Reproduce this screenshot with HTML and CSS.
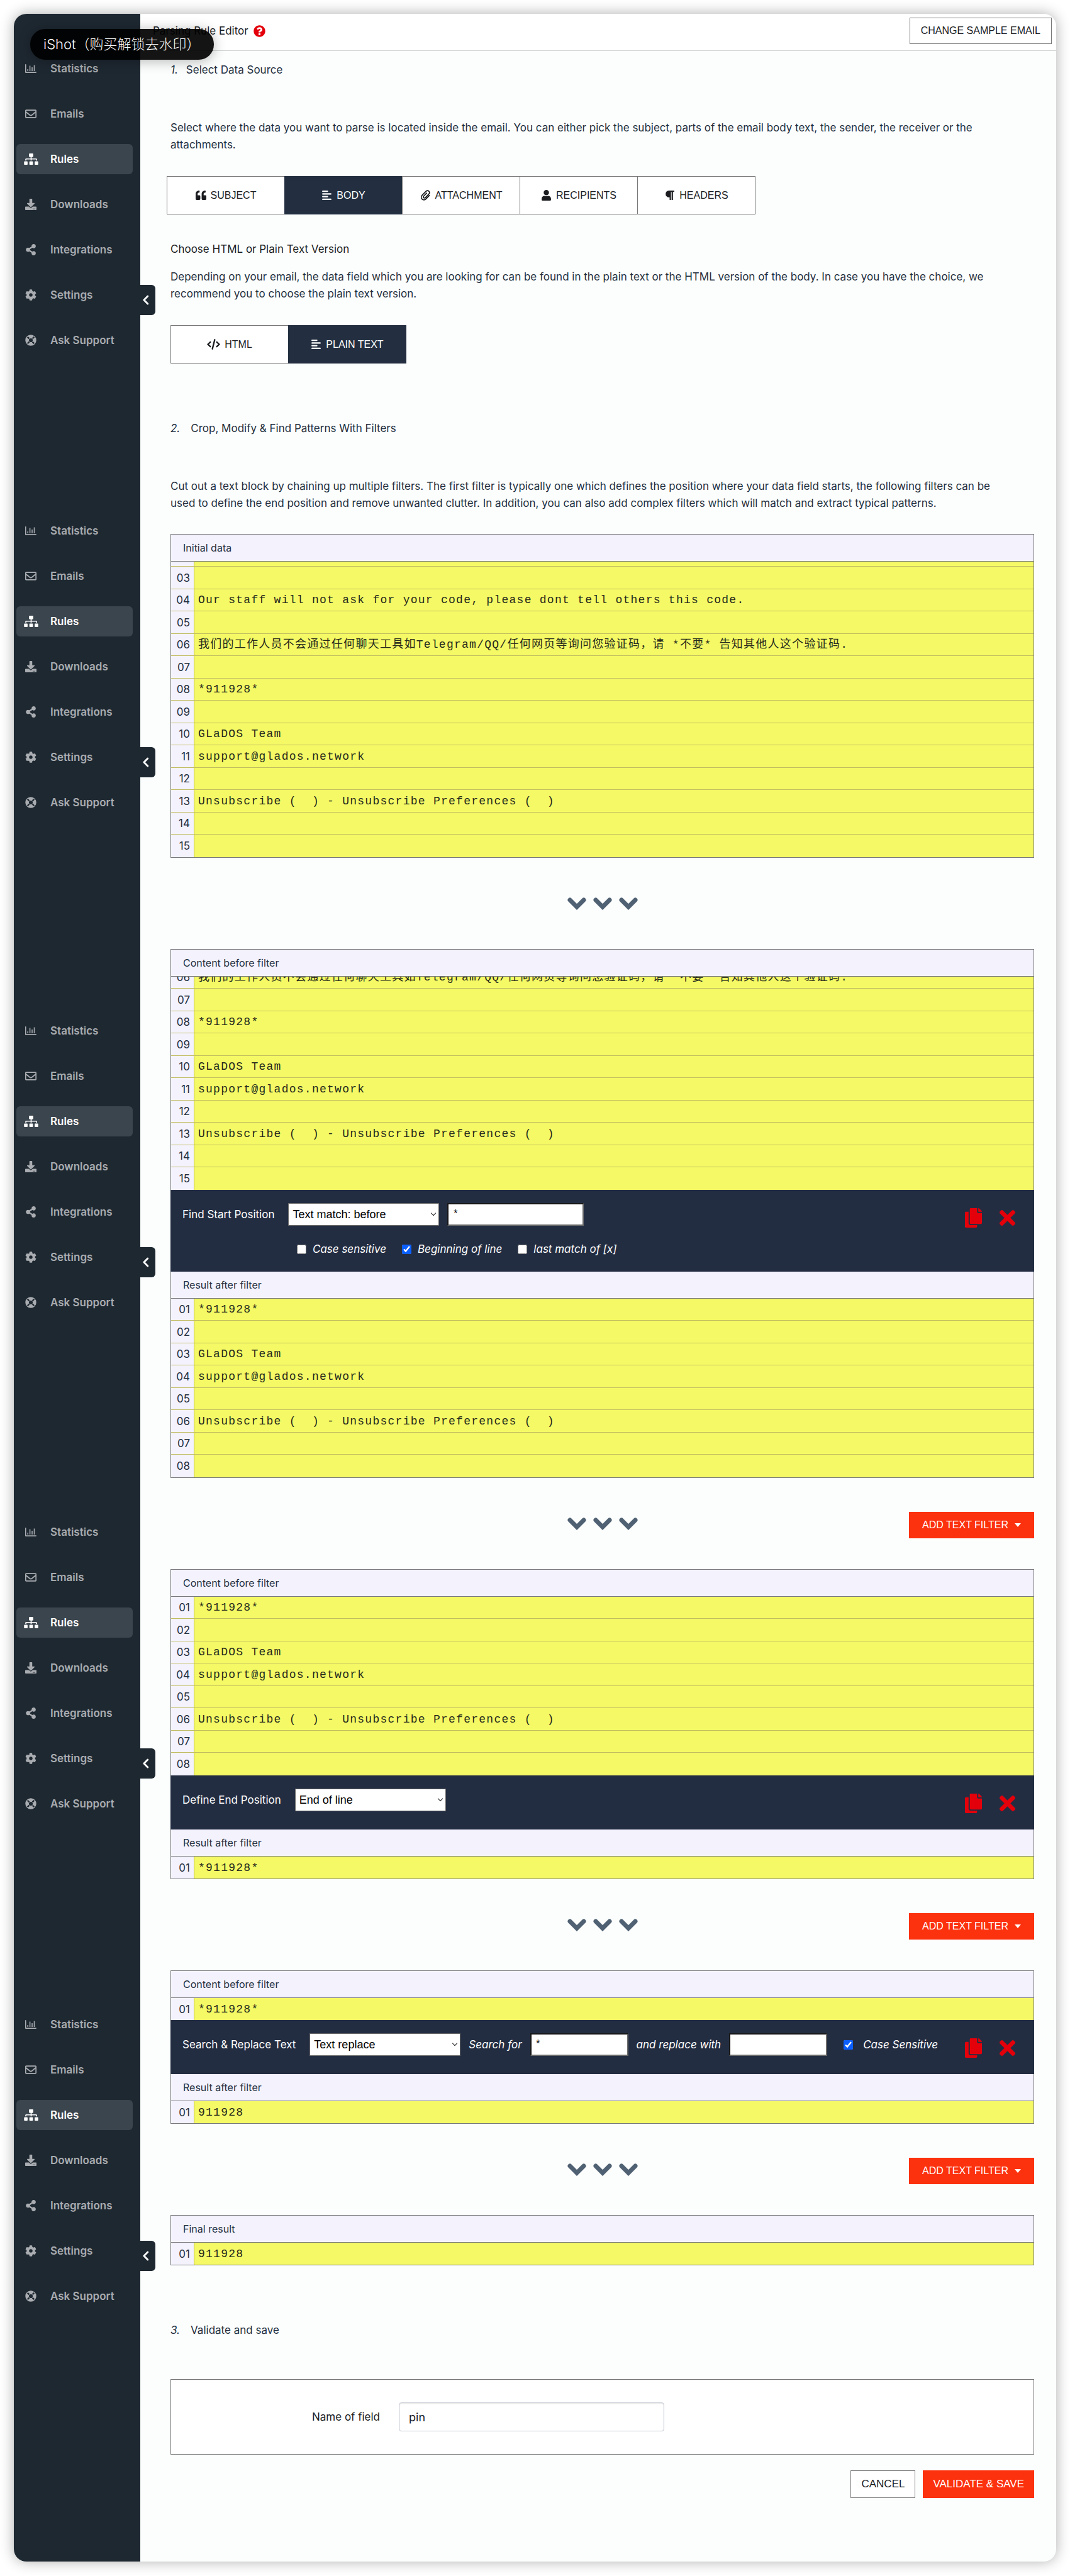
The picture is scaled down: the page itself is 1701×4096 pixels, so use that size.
FILE: index.html
```html
<!DOCTYPE html>
<html lang="en">
<head>
<meta charset="utf-8">
<title>Parsing Rule Editor</title>
<link rel="stylesheet" href="styles.css">
</head>
<body>
<svg class="sprite" aria-hidden="true">
  <symbol id="i-stats" viewBox="0 0 512 512"><path fill="none" stroke="currentColor" stroke-width="44" stroke-linecap="round" stroke-linejoin="round" d="M22 76v354h468"/><path fill="none" stroke="currentColor" stroke-width="44" d="M120 370v-84M216 370V130M314 370V200M412 370V100"/></symbol>
  <symbol id="i-mail" viewBox="0 0 512 512"><path fill="currentColor" d="M464 64H48C21.49 64 0 85.49 0 112v288c0 26.51 21.49 48 48 48h416c26.51 0 48-21.49 48-48V112c0-26.51-21.49-48-48-48zm0 48v40.805c-22.422 18.259-58.168 46.651-134.587 106.49-16.841 13.247-50.201 45.072-73.413 44.701-23.208.375-56.579-31.459-73.413-44.701C106.18 199.465 70.425 171.067 48 152.805V112h416zM48 400V214.398c22.914 18.251 55.409 43.862 104.938 82.646 21.857 17.205 60.134 55.186 103.062 54.955 42.717.231 80.509-37.199 103.053-54.947 49.528-38.783 82.032-64.401 104.947-82.653V400H48z"/></symbol>
  <symbol id="i-rules" viewBox="0 0 640 512"><path fill="currentColor" d="M128 352H32c-17.67 0-32 14.33-32 32v96c0 17.67 14.33 32 32 32h96c17.67 0 32-14.33 32-32v-96c0-17.67-14.33-32-32-32zm-24-80h192v48h48v-48h192v48h48v-57.59c0-21.17-17.23-38.41-38.41-38.41H344v-64h40c17.67 0 32-14.33 32-32V32c0-17.67-14.33-32-32-32H256c-17.67 0-32 14.33-32 32v96c0 17.67 14.33 32 32 32h40v64H94.41C73.23 224 56 241.23 56 262.41V320h48v-48zm264 80h-96c-17.67 0-32 14.33-32 32v96c0 17.67 14.33 32 32 32h96c17.67 0 32-14.33 32-32v-96c0-17.67-14.33-32-32-32zm240 0h-96c-17.67 0-32 14.33-32 32v96c0 17.67 14.33 32 32 32h96c17.67 0 32-14.33 32-32v-96c0-17.67-14.33-32-32-32z"/></symbol>
  <symbol id="i-down" viewBox="0 0 512 512"><path fill="currentColor" d="M216 0h80c13.3 0 24 10.7 24 24v168h87.7c17.8 0 26.7 21.5 14.1 34.1L269.7 378.3c-7.5 7.5-19.8 7.5-27.3 0L90.1 226.1c-12.6-12.6-3.7-34.1 14.1-34.1H192V24c0-13.3 10.7-24 24-24zm296 376v112c0 13.3-10.7 24-24 24H24c-13.3 0-24-10.7-24-24V376c0-13.3 10.7-24 24-24h146.7l49 49c20.1 20.1 52.5 20.1 72.6 0l49-49H488c13.3 0 24 10.7 24 24zm-124 88c0-11-9-20-20-20s-20 9-20 20 9 20 20 20 20-9 20-20zm64 0c0-11-9-20-20-20s-20 9-20 20 9 20 20 20 20-9 20-20z"/></symbol>
  <symbol id="i-share" viewBox="-32 0 512 512"><path fill="currentColor" d="M352 320c-22.608 0-43.387 7.819-59.79 20.895l-102.486-64.054a96.551 96.551 0 0 0 0-41.683l102.486-64.054C308.613 184.181 329.392 192 352 192c53.019 0 96-42.981 96-96S405.019 0 352 0s-96 42.981-96 96c0 7.158.79 14.13 2.276 20.841L155.79 180.895C139.387 167.819 118.608 160 96 160c-53.019 0-96 42.981-96 96s42.981 96 96 96c22.608 0 43.387-7.819 59.79-20.895l102.486 64.054A96.301 96.301 0 0 0 256 416c0 53.019 42.981 96 96 96s96-42.981 96-96-42.981-96-96-96z"/></symbol>
  <symbol id="i-cog" viewBox="0 0 512 512"><path fill="currentColor" d="M487.4 315.7l-42.6-24.6c4.3-23.2 4.3-47 0-70.2l42.6-24.6c4.9-2.8 7.1-8.6 5.5-14-11.1-35.6-30-67.8-54.7-94.6-3.8-4.1-10-5.1-14.8-2.3L380.8 110c-17.9-15.4-38.5-27.3-60.8-35.1V25.8c0-5.6-3.9-10.5-9.4-11.7-36.7-8.2-74.3-7.8-109.2 0-5.5 1.2-9.4 6.1-9.4 11.7V75c-22.2 7.9-42.8 19.8-60.8 35.1L88.7 85.5c-4.9-2.8-11-1.9-14.8 2.3-24.7 26.7-43.6 58.9-54.7 94.6-1.7 5.4.6 11.2 5.5 14L67.3 221c-4.3 23.2-4.3 47 0 70.2l-42.6 24.6c-4.9 2.8-7.1 8.6-5.5 14 11.1 35.6 30 67.8 54.7 94.6 3.8 4.1 10 5.1 14.8 2.3l42.6-24.6c17.9 15.4 38.5 27.3 60.8 35.1v49.2c0 5.6 3.9 10.5 9.4 11.7 36.7 8.2 74.3 7.8 109.2 0 5.5-1.2 9.4-6.1 9.4-11.7v-49.2c22.2-7.9 42.8-19.8 60.8-35.1l42.6 24.6c4.9 2.8 11 1.9 14.8-2.3 24.7-26.7 43.6-58.9 54.7-94.6 1.5-5.5-.7-11.3-5.6-14.1zM256 336c-44.1 0-80-35.9-80-80s35.9-80 80-80 80 35.9 80 80-35.9 80-80 80z"/></symbol>
  <symbol id="i-ring" viewBox="0 0 512 512"><circle cx="256" cy="256" r="168" fill="none" stroke="currentColor" stroke-width="160"/><path fill="none" stroke="#1e2831" stroke-width="66" d="M106 106l76 76M406 106l-76 76M106 406l76-76M406 406l-76-76"/></symbol>
  <symbol id="i-left" viewBox="0 0 320 512"><path fill="none" stroke="currentColor" stroke-width="74" stroke-linecap="round" stroke-linejoin="round" d="M232 104L80 256l152 152"/></symbol>
  <symbol id="i-help" viewBox="0 0 512 512"><path fill="currentColor" d="M504 256c0 136.997-111.043 248-248 248S8 392.997 8 256C8 119.083 119.043 8 256 8s248 111.083 248 248zM262.655 90c-54.497 0-89.255 22.957-116.549 63.758-3.536 5.286-2.353 12.415 2.715 16.258l34.699 26.31c5.205 3.947 12.621 3.008 16.665-2.122 17.864-22.658 30.113-35.797 57.303-35.797 20.429 0 45.698 13.148 45.698 32.958 0 14.976-12.363 22.667-32.534 33.976C247.128 238.528 216 254.941 216 296v4c0 6.627 5.373 12 12 12h56c6.627 0 12-5.373 12-12v-1.333c0-28.462 83.186-29.647 83.186-106.667 0-58.002-60.165-102-116.531-102zM256 338c-25.365 0-46 20.635-46 46 0 25.364 20.635 46 46 46s46-20.636 46-46c0-25.365-20.635-46-46-46z"/></symbol>
  <symbol id="i-quote" viewBox="0 0 512 512"><path fill="currentColor" d="M464 256h-80v-64c0-35.3 28.7-64 64-64h8c13.3 0 24-10.7 24-24V56c0-13.3-10.7-24-24-24h-8c-88.4 0-160 71.6-160 160v240c0 26.5 21.5 48 48 48h128c26.5 0 48-21.5 48-48V304c0-26.5-21.5-48-48-48zm-288 0H96v-64c0-35.3 28.7-64 64-64h8c13.3 0 24-10.7 24-24V56c0-13.3-10.7-24-24-24h-8C71.6 32 0 103.6 0 192v240c0 26.5 21.5 48 48 48h128c26.5 0 48-21.5 48-48V304c0-26.5-21.5-48-48-48z"/></symbol>
  <symbol id="i-align" viewBox="0 0 448 512"><path fill="none" stroke="currentColor" stroke-width="64" stroke-linecap="round" d="M32 64h224M32 192h384M32 320h224M32 448h384"/></symbol>
  <symbol id="i-clip" viewBox="0 0 448 512"><path fill="none" stroke="currentColor" stroke-width="52" stroke-linecap="round" stroke-linejoin="round" d="M404 268L242 434c-52 54-136 54-184 4s-48-130 4-184L248 66c40-40 100-38 136 0s36 96-2 136L214 374c-24 24-58 22-80 0s-22-56 2-80l138-142"/></symbol>
  <symbol id="i-user" viewBox="0 0 448 512"><path fill="currentColor" d="M224 256c70.7 0 128-57.3 128-128S294.7 0 224 0 96 57.3 96 128s57.3 128 128 128zm89.6 32h-16.7c-22.2 10.2-46.9 16-72.9 16s-50.6-5.8-72.9-16h-16.7C60.2 288 0 348.2 0 422.4V464c0 26.5 21.5 48 48 48h352c26.5 0 48-21.5 48-48v-41.6c0-74.2-60.2-134.4-134.4-134.4z"/></symbol>
  <symbol id="i-para" viewBox="0 0 448 512"><path fill="currentColor" d="M448 48v32a16 16 0 0 1-16 16h-48v368a16 16 0 0 1-16 16h-32a16 16 0 0 1-16-16V96h-32v368a16 16 0 0 1-16 16h-32a16 16 0 0 1-16-16V352h-32a160 160 0 0 1 0-320h240a16 16 0 0 1 16 16z"/></symbol>
  <symbol id="i-code" viewBox="0 0 640 512"><path fill="none" stroke="currentColor" stroke-width="72" stroke-linecap="round" stroke-linejoin="round" d="M164 146L46 256l118 110M476 146l118 110-118 110M376 36L264 476"/></symbol>
  <symbol id="i-copy" viewBox="0 0 448 512"><path fill="currentColor" d="M320 448v40c0 13.255-10.745 24-24 24H24c-13.255 0-24-10.745-24-24V120c0-13.255 10.745-24 24-24h72v296c0 30.879 25.121 56 56 56h168zm0-344V0H152c-13.255 0-24 10.745-24 24v368c0 13.255 10.745 24 24 24h272c13.255 0 24-10.745 24-24V128H344c-13.2 0-24-10.8-24-24zm120.971-31.029L375.029 7.029A24 24 0 0 0 358.059 0H352v96h96v-6.059a24 24 0 0 0-7.029-16.97z"/></symbol>
  <symbol id="i-times" viewBox="0 80 352 352"><path fill="currentColor" d="M242.72 256l100.07-100.07c12.28-12.28 12.28-32.19 0-44.48l-22.24-22.24c-12.28-12.28-32.19-12.28-44.48 0L176 189.28 75.93 89.21c-12.28-12.28-32.19-12.28-44.48 0L9.21 111.45c-12.28 12.28-12.28 32.19 0 44.48L109.28 256 9.21 356.07c-12.28 12.28-12.28 32.19 0 44.48l22.24 22.24c12.28 12.28 32.2 12.28 44.48 0L176 322.72l100.07 100.07c12.28 12.28 32.2 12.28 44.48 0l22.24-22.24c12.28-12.28 12.28-32.19 0-44.48L242.72 256z"/></symbol>
  <symbol id="i-chevs" viewBox="0 0 112 20"><path fill="none" stroke="currentColor" stroke-width="7" stroke-linecap="round" d="M4 4l11 11L26 4M45 4l11 11L67 4M86 4l11 11 11-11"/></symbol>
</svg>

<div class="watermark">iShot（购买解锁去水印）</div>

<div class="window">
  <aside class="sidebar">
    <nav class="nav">
      <a href="#"><span class="slot"><svg><use href="#i-stats"/></svg></span>Statistics</a>
      <a href="#"><span class="slot"><svg><use href="#i-mail"/></svg></span>Emails</a>
      <a href="#" class="active"><span class="slot"><svg class="wide"><use href="#i-rules"/></svg></span>Rules</a>
      <a href="#"><span class="slot"><svg><use href="#i-down"/></svg></span>Downloads</a>
      <a href="#"><span class="slot"><svg><use href="#i-share"/></svg></span>Integrations</a>
      <a href="#"><span class="slot"><svg><use href="#i-cog"/></svg></span>Settings</a>
      <a href="#"><span class="slot"><svg><use href="#i-ring"/></svg></span>Ask Support</a>
      <button class="collapse" aria-label="Collapse menu"><svg><use href="#i-left"/></svg></button>
    </nav>
    <nav class="nav">
      <a href="#"><span class="slot"><svg><use href="#i-stats"/></svg></span>Statistics</a>
      <a href="#"><span class="slot"><svg><use href="#i-mail"/></svg></span>Emails</a>
      <a href="#" class="active"><span class="slot"><svg class="wide"><use href="#i-rules"/></svg></span>Rules</a>
      <a href="#"><span class="slot"><svg><use href="#i-down"/></svg></span>Downloads</a>
      <a href="#"><span class="slot"><svg><use href="#i-share"/></svg></span>Integrations</a>
      <a href="#"><span class="slot"><svg><use href="#i-cog"/></svg></span>Settings</a>
      <a href="#"><span class="slot"><svg><use href="#i-ring"/></svg></span>Ask Support</a>
      <button class="collapse" aria-label="Collapse menu"><svg><use href="#i-left"/></svg></button>
    </nav>
    <nav class="nav">
      <a href="#"><span class="slot"><svg><use href="#i-stats"/></svg></span>Statistics</a>
      <a href="#"><span class="slot"><svg><use href="#i-mail"/></svg></span>Emails</a>
      <a href="#" class="active"><span class="slot"><svg class="wide"><use href="#i-rules"/></svg></span>Rules</a>
      <a href="#"><span class="slot"><svg><use href="#i-down"/></svg></span>Downloads</a>
      <a href="#"><span class="slot"><svg><use href="#i-share"/></svg></span>Integrations</a>
      <a href="#"><span class="slot"><svg><use href="#i-cog"/></svg></span>Settings</a>
      <a href="#"><span class="slot"><svg><use href="#i-ring"/></svg></span>Ask Support</a>
      <button class="collapse" aria-label="Collapse menu"><svg><use href="#i-left"/></svg></button>
    </nav>
    <nav class="nav">
      <a href="#"><span class="slot"><svg><use href="#i-stats"/></svg></span>Statistics</a>
      <a href="#"><span class="slot"><svg><use href="#i-mail"/></svg></span>Emails</a>
      <a href="#" class="active"><span class="slot"><svg class="wide"><use href="#i-rules"/></svg></span>Rules</a>
      <a href="#"><span class="slot"><svg><use href="#i-down"/></svg></span>Downloads</a>
      <a href="#"><span class="slot"><svg><use href="#i-share"/></svg></span>Integrations</a>
      <a href="#"><span class="slot"><svg><use href="#i-cog"/></svg></span>Settings</a>
      <a href="#"><span class="slot"><svg><use href="#i-ring"/></svg></span>Ask Support</a>
      <button class="collapse" aria-label="Collapse menu"><svg><use href="#i-left"/></svg></button>
    </nav>
    <nav class="nav">
      <a href="#"><span class="slot"><svg><use href="#i-stats"/></svg></span>Statistics</a>
      <a href="#"><span class="slot"><svg><use href="#i-mail"/></svg></span>Emails</a>
      <a href="#" class="active"><span class="slot"><svg class="wide"><use href="#i-rules"/></svg></span>Rules</a>
      <a href="#"><span class="slot"><svg><use href="#i-down"/></svg></span>Downloads</a>
      <a href="#"><span class="slot"><svg><use href="#i-share"/></svg></span>Integrations</a>
      <a href="#"><span class="slot"><svg><use href="#i-cog"/></svg></span>Settings</a>
      <a href="#"><span class="slot"><svg><use href="#i-ring"/></svg></span>Ask Support</a>
      <button class="collapse" aria-label="Collapse menu"><svg><use href="#i-left"/></svg></button>
    </nav>
  </aside>

  <div class="page">
    <header class="topbar">
      <h1>Parsing Rule Editor</h1>
      <svg class="help"><use href="#i-help"/></svg>
      <button class="btn outline">CHANGE SAMPLE EMAIL</button>
    </header>

    <main class="content">
      <h2 class="step tight"><i>1.</i>Select Data Source</h2>
      <p class="text intro">Select where the data you want to parse is located inside the email. You can either pick the subject, parts of the email body text, the sender, the receiver or the attachments.</p>
      <div class="tabs outdent">
        <button><svg><use href="#i-quote"/></svg>SUBJECT</button>
        <button class="on"><svg><use href="#i-align"/></svg>BODY</button>
        <button><svg><use href="#i-clip"/></svg>ATTACHMENT</button>
        <button><svg><use href="#i-user"/></svg>RECIPIENTS</button>
        <button><svg><use href="#i-para"/></svg>HEADERS</button>
      </div>
      <h3 class="sub">Choose HTML or Plain Text Version</h3>
      <p class="text">Depending on your email, the data field which you are looking for can be found in the plain text or the HTML version of the body. In case you have the choice, we recommend you to choose the plain text version.</p>
      <div class="tabs">
        <button><svg class="wide"><use href="#i-code"/></svg>HTML</button>
        <button class="on"><svg><use href="#i-align"/></svg>PLAIN TEXT</button>
      </div>

      <h2 class="step spaced"><i>2.</i>Crop, Modify &amp; Find Patterns With Filters</h2>
      <p class="text intro">Cut out a text block by chaining up multiple filters. The first filter is typically one which defines the position where your data field starts, the following filters can be used to define the end position and remove unwanted clutter. In addition, you can also add complex filters which will match and extract typical patterns.</p>

      <section class="panel first">
        <h4>Initial data</h4>
        <div class="pane tall">
          <table>
            <tr><th></th><td></td></tr>
            <tr><th>03</th><td></td></tr>
            <tr><th>04</th><td>Our staff will not ask for your code, please dont tell others this code.</td></tr>
            <tr><th>05</th><td></td></tr>
            <tr><th>06</th><td>我们的工作人员不会通过任何聊天工具如Telegram/QQ/任何网页等询问您验证码，请 *不要* 告知其他人这个验证码.</td></tr>
            <tr><th>07</th><td></td></tr>
            <tr><th>08</th><td>*911928*</td></tr>
            <tr><th>09</th><td></td></tr>
            <tr><th>10</th><td>GLaDOS Team</td></tr>
            <tr><th>11</th><td>support@glados.network</td></tr>
            <tr><th>12</th><td></td></tr>
            <tr><th>13</th><td>Unsubscribe (  ) - Unsubscribe Preferences (  )</td></tr>
            <tr><th>14</th><td></td></tr>
            <tr><th>15</th><td></td></tr>
          </table>
        </div>
      </section>

      <div class="link"><svg class="chevs"><use href="#i-chevs"/></svg></div>

      <section class="panel">
        <h4>Content before filter</h4>
        <div class="pane short">
          <table>
            <tr><th>06</th><td>我们的工作人员不会通过任何聊天工具如Telegram/QQ/任何网页等询问您验证码，请 *不要* 告知其他人这个验证码.</td></tr>
            <tr><th>07</th><td></td></tr>
            <tr><th>08</th><td>*911928*</td></tr>
            <tr><th>09</th><td></td></tr>
            <tr><th>10</th><td>GLaDOS Team</td></tr>
            <tr><th>11</th><td>support@glados.network</td></tr>
            <tr><th>12</th><td></td></tr>
            <tr><th>13</th><td>Unsubscribe (  ) - Unsubscribe Preferences (  )</td></tr>
            <tr><th>14</th><td></td></tr>
            <tr><th>15</th><td></td></tr>
          </table>
        </div>
        <div class="filter">
          <div class="rows">
            <div class="row">
              <label class="name" for="f1">Find Start Position</label>
              <span class="pick"><select id="f1"><option>Text match: before</option></select></span>
              <input class="box w-l" type="text" value="*" aria-label="Match text">
            </div>
            <div class="row checks">
              <label><input type="checkbox">Case sensitive</label>
              <label><input type="checkbox" checked>Beginning of line</label>
              <label><input type="checkbox">last match of [x]</label>
            </div>
          </div>
          <div class="actions">
            <button aria-label="Copy filter"><svg class="copy"><use href="#i-copy"/></svg></button>
            <button aria-label="Remove filter"><svg class="times"><use href="#i-times"/></svg></button>
          </div>
        </div>
        <h4>Result after filter</h4>
        <table>
          <tr><th>01</th><td>*911928*</td></tr>
          <tr><th>02</th><td></td></tr>
          <tr><th>03</th><td>GLaDOS Team</td></tr>
          <tr><th>04</th><td>support@glados.network</td></tr>
          <tr><th>05</th><td></td></tr>
          <tr><th>06</th><td>Unsubscribe (  ) - Unsubscribe Preferences (  )</td></tr>
          <tr><th>07</th><td></td></tr>
          <tr><th>08</th><td></td></tr>
        </table>
      </section>

      <div class="link"><svg class="chevs"><use href="#i-chevs"/></svg><button class="btn red add">ADD TEXT FILTER<span class="caret"></span></button></div>

      <section class="panel">
        <h4>Content before filter</h4>
        <table>
          <tr><th>01</th><td>*911928*</td></tr>
          <tr><th>02</th><td></td></tr>
          <tr><th>03</th><td>GLaDOS Team</td></tr>
          <tr><th>04</th><td>support@glados.network</td></tr>
          <tr><th>05</th><td></td></tr>
          <tr><th>06</th><td>Unsubscribe (  ) - Unsubscribe Preferences (  )</td></tr>
          <tr><th>07</th><td></td></tr>
          <tr><th>08</th><td></td></tr>
        </table>
        <div class="filter">
          <div class="rows">
            <div class="row">
              <label class="name" for="f2">Define End Position</label>
              <span class="pick"><select id="f2"><option>End of line</option></select></span>
            </div>
          </div>
          <div class="actions">
            <button aria-label="Copy filter"><svg class="copy"><use href="#i-copy"/></svg></button>
            <button aria-label="Remove filter"><svg class="times"><use href="#i-times"/></svg></button>
          </div>
        </div>
        <h4>Result after filter</h4>
        <table>
          <tr><th>01</th><td>*911928*</td></tr>
        </table>
      </section>

      <div class="link"><svg class="chevs"><use href="#i-chevs"/></svg><button class="btn red add">ADD TEXT FILTER<span class="caret"></span></button></div>

      <section class="panel">
        <h4>Content before filter</h4>
        <table>
          <tr><th>01</th><td>*911928*</td></tr>
        </table>
        <div class="filter">
          <div class="rows">
            <div class="row">
              <label class="name" for="f3">Search &amp; Replace Text</label>
              <span class="pick"><select id="f3"><option>Text replace</option></select></span>
              <label class="hint" for="from">Search for</label>
              <input class="box w-s" id="from" type="text" value="*">
              <label class="hint" for="to">and replace with</label>
              <input class="box w-s" id="to" type="text">
              <label class="hint cased"><input type="checkbox" checked>Case Sensitive</label>
            </div>
          </div>
          <div class="actions">
            <button aria-label="Copy filter"><svg class="copy"><use href="#i-copy"/></svg></button>
            <button aria-label="Remove filter"><svg class="times"><use href="#i-times"/></svg></button>
          </div>
        </div>
        <h4>Result after filter</h4>
        <table>
          <tr><th>01</th><td>911928</td></tr>
        </table>
      </section>

      <div class="link"><svg class="chevs"><use href="#i-chevs"/></svg><button class="btn red add">ADD TEXT FILTER<span class="caret"></span></button></div>

      <section class="panel">
        <h4>Final result</h4>
        <table>
          <tr><th>01</th><td>911928</td></tr>
        </table>
      </section>

      <h2 class="step spaced"><i>3.</i>Validate and save</h2>
      <div class="save">
        <label for="field">Name of field</label>
        <input id="field" type="text" value="pin">
      </div>
      <div class="buttons">
        <button class="btn outline">CANCEL</button>
        <button class="btn red">VALIDATE &amp; SAVE</button>
      </div>
    </main>
  </div>
</div>
</body>
</html>
```
FILE: styles.css
```css
*, *::before, *::after { box-sizing: border-box; }

body {
  margin: 0;
  padding: 22px 22px 21px;
  background: #fff;
  color: #1a1c1f;
  font: 17px/27px Inter, "Noto Sans CJK SC", sans-serif;
  font-optical-sizing: none;
}

h1, h2, h3, h4, p { margin: 0; font-size: inherit; font-weight: 400; }
button { font-family: "Liberation Sans", Arial, sans-serif; font-size: 16px; border: 0; padding: 0; }
.sprite { position: absolute; width: 0; height: 0; }

.watermark {
  position: absolute;
  left: 48px;
  top: 46px;
  z-index: 3;
  padding: 0 21px;
  border-radius: 24px;
  background: rgba(0, 0, 0, .92);
  color: #fff;
  font-size: 22px;
  font-weight: 300;
  line-height: 49px;
  box-shadow: 0 2px 20px rgba(0, 0, 0, .3);
}

.window {
  display: flex;
  border-radius: 20px;
  background: #fcfefd;
  box-shadow: 0 0 22px rgba(0, 0, 0, .32);
}

/* Sidebar */
.sidebar {
  flex: none;
  width: 201px;
  padding-top: 63px;
  border-radius: 20px 0 0 20px;
  background: #1e2831;
}
.nav { position: relative; display: flex; flex-direction: column; gap: 24px; }
.nav:nth-child(2) { margin-top: 255px; }
.nav:nth-child(3) { margin-top: 315px; }
.nav:nth-child(4) { margin-top: 317px; }
.nav:nth-child(5) { margin-top: 303px; }
.nav a {
  display: flex;
  align-items: center;
  height: 48px;
  margin: 0 12px 0 4px;
  border-radius: 6px;
  color: #a9acb0;
  font-size: 17px;
  font-weight: 600;
  text-decoration: none;
}
.nav a.active { background: #3b454e; color: #fff; }
.slot { display: flex; justify-content: center; width: 46px; margin-right: 8px; }
.slot svg { width: 18px; height: 18px; }
.slot svg.wide { width: 23px; }
.collapse {
  position: absolute;
  top: 368px;
  right: -24px;
  display: flex;
  align-items: center;
  justify-content: center;
  width: 24px;
  height: 48px;
  padding-right: 6px;
  border-radius: 0 6px 6px 0;
  background: #1e2831;
  color: #fff;
}
.collapse svg { width: 14px; height: 20px; }

/* Page */
.page { flex: 1; min-width: 0; }
.topbar {
  display: flex;
  align-items: center;
  height: 59px;
  padding: 0 7px 4px 20px;
  border-bottom: 1px solid #cfd3d3;
  border-radius: 0 20px 0 0;
  background: #fff;
}
.help { width: 19px; height: 19px; margin-left: 8px; color: #e3000b; }
.topbar .btn { height: 42px; margin-left: auto; padding: 0 17px; }

.btn { display: inline-flex; align-items: center; justify-content: center; padding: 0 15px; }
.outline { border: 1px solid #777; background: #fff; color: #1a1c1f; }
.red { background: #fc310d; color: #fff; padding: 0 16px; }

.content { padding: 16px 35px 101px 48px; }
.step { display: flex; gap: 17px; line-height: 28px; color: #232f40; }
.step.tight { gap: 13px; }
.step.spaced { margin-top: 89px; }
.text { padding-right: 36px; color: #232f40; }
.intro { margin-top: 65px; }
.sub { margin: 42px 0 17px; }

.tabs { display: flex; margin-top: 36px; }
.tabs.outdent { margin-left: -6px; }
.tabs button {
  display: flex;
  align-items: center;
  justify-content: center;
  gap: 7px;
  width: 188px;
  height: 61px;
  margin-right: -1px;
  border: 1px solid #777;
  background: #fff;
  color: #1a1c1f;
}
.tabs button.on { border-color: #232f40; background: #232f40; color: #fff; }
.tabs svg { width: 17px; height: 17px; }
.tabs svg.wide { width: 21px; }

/* Data panels */
.panel { border: 1px solid #777a7c; background: #f4f2fd; }
.panel.first { margin-top: 35px; }
.panel h4 {
  height: 43px;
  padding-left: 19px;
  border-bottom: 1px solid #777a7c;
  color: #232f40;
  font-size: 16px;
  line-height: 42px;
}
.pane { display: flex; flex-direction: column; justify-content: flex-end; overflow: hidden; }
.pane.tall { height: 470px; }
.pane.short { height: 339px; }
.pane table { flex: none; }

table { width: 100%; border-collapse: separate; border-spacing: 0; table-layout: fixed; }
th, td { height: 35px; padding: 0 6px; border-bottom: 1px solid #c0bc60; }
tr:nth-child(even) > * { height: 36px; }
tr:last-child > * { border-bottom: 0; }
th {
  width: 37px;
  border-right: 1px solid #c0bc60;
  color: #232f40;
  font-size: 17px;
  font-weight: 400;
  line-height: 34px;
  text-align: right;
}
td {
  background: #f4f965;
  color: #26291c;
  font: 18px/24px "Liberation Mono", "Courier New", "Noto Sans CJK SC", monospace;
  letter-spacing: .07em;
  white-space: pre;
}

.filter {
  display: flex;
  justify-content: space-between;
  margin: 0 -1px;
  padding: 21px 30px 26px 19px;
  background: #232d42;
  color: #fff;
}
.row { display: flex; align-items: center; }
.name { margin-right: 22px; }
.pick { position: relative; display: block; }
.pick::after {
  content: "";
  position: absolute;
  right: 6px;
  top: 13px;
  width: 6px;
  height: 6px;
  border: solid #222;
  border-width: 0 1px 1px 0;
  transform: rotate(45deg);
}
.pick select {
  appearance: none;
  width: 240px;
  height: 36px;
  padding: 0 6px;
  border: 1px solid #666;
  border-radius: 0;
  background: #fff;
  color: #000;
  font: 18px "Liberation Sans", Arial, sans-serif;
}
.box {
  height: 36px;
  margin-left: 13px;
  padding: 0 6px;
  border: 2px inset #6b6b6b;
  background: #fff;
  font: 16px "Liberation Mono", monospace;
}
.w-l { width: 217px; }
.w-s { width: 156px; }
.checks { gap: 25px; height: 20px; margin: 27px 0 0 182px; font-style: italic; }
.checks label, .cased { display: flex; align-items: center; gap: 10px; }
.hint { margin-left: 13px; font-style: italic; }
.cased { margin-left: 26px; gap: 16px; }
input[type="checkbox"] { width: 15px; height: 15px; margin: 0; accent-color: #0b5fff; }
.actions { display: flex; align-items: center; gap: 28px; height: 32px; margin-top: 7px; }
.actions button { display: block; background: none; color: #e3000b; }
.actions svg { display: block; }
.copy { width: 27px; height: 31px; }
.times { width: 25px; height: 25px; }

.link {
  display: grid;
  grid-template-columns: 1fr auto 1fr;
  align-items: start;
  height: 145px;
  padding-top: 54px;
}
.chevs { grid-column: 2; width: 112px; height: 20px; margin-top: 9px; color: #4f6173; }
.add { justify-self: end; height: 42px; padding: 0 21px; }
.caret { margin-left: 10px; border: 5px solid transparent; border-top: 6px solid #fff; border-bottom: 0; }

/* Save */
.save {
  display: flex;
  align-items: center;
  gap: 30px;
  height: 120px;
  margin-top: 64px;
  border: 1px solid #777;
  background: #fff;
}
.save label { width: 332px; text-align: right; }
.save input {
  width: 422px;
  height: 46px;
  padding: 0 15px;
  border: 1px solid #c3c8d2;
  border-radius: 4px;
  box-shadow: inset 0 1px 2px rgba(0, 0, 0, .12);
  font: 18px Inter, sans-serif;
  color: #1a1c1f;
}
.buttons { display: flex; justify-content: flex-end; gap: 12px; margin-top: 25px; }
.buttons .btn { height: 44px; padding: 0 16px; font-size: 17px; }
```
